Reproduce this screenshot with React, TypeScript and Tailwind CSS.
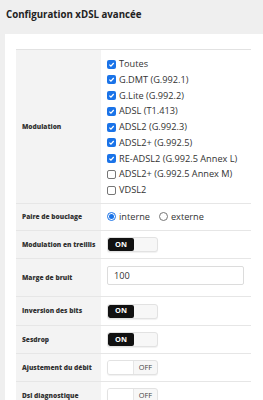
import React from 'react';

const modulations: { label: string; checked: boolean }[] = [
  { label: 'Toutes', checked: true },
  { label: 'G.DMT (G.992.1)', checked: true },
  { label: 'G.Lite (G.992.2)', checked: true },
  { label: 'ADSL (T1.413)', checked: true },
  { label: 'ADSL2 (G.992.3)', checked: true },
  { label: 'ADSL2+ (G.992.5)', checked: true },
  { label: 'RE-ADSL2 (G.992.5 Annex L)', checked: true },
  { label: 'ADSL2+ (G.992.5 Annex M)', checked: false },
  { label: 'VDSL2', checked: false },
];

const Checkbox: React.FC<{ checked: boolean }> = ({ checked }) =>
  checked ? (
    <span className="w-[9px] h-[9px] rounded-[2px] bg-[#1a73e8] flex items-center justify-center flex-shrink-0">
      <svg width="7" height="7" viewBox="0 0 10 10">
        <path d="M2 5.2 L4.2 7.3 L8.2 2.8" stroke="#fff" strokeWidth="1.8" fill="none" />
      </svg>
    </span>
  ) : (
    <span className="w-[9px] h-[9px] rounded-[2px] border border-[#767676] bg-white flex-shrink-0" />
  );

const Radio: React.FC<{ checked: boolean }> = ({ checked }) => (
  <span
    className={`w-[9px] h-[9px] rounded-full border flex items-center justify-center flex-shrink-0 ${
      checked ? 'border-[#1a73e8]' : 'border-[#767676]'
    }`}
  >
    {checked && <span className="w-[5px] h-[5px] rounded-full bg-[#1a73e8]" />}
  </span>
);

const Toggle: React.FC<{ on: boolean }> = ({ on }) => (
  <div className="w-[51px] h-[15px] flex rounded-[3px] border border-[#e2e2e2] bg-[#f7f7f7] shadow-[0_1px_1px_rgba(0,0,0,0.06)] overflow-hidden text-[7.4px]">
    {on ? (
      <>
        <div className="w-[26px] h-full bg-[#111] text-white font-bold flex items-center justify-center rounded-[2px]">ON</div>
        <div className="flex-1" />
      </>
    ) : (
      <>
        <div className="w-[26px] h-full bg-white border-r border-[#e6e6e6]" />
        <div className="flex-1 text-[#444] flex items-center justify-center">OFF</div>
      </>
    )}
  </div>
);

const Row: React.FC<{ label: string; height?: string; children: React.ReactNode }> = ({ label, height, children }) => (
  <div className={`flex border-b border-[#e6e6e6] ${height ?? ''}`}>
    <div className="w-[85px] bg-[#f3f3f3] flex items-center pl-[6px] text-[6.6px] font-extrabold text-[#333] flex-shrink-0">
      {label}
    </div>
    <div className="flex-1 flex items-center pl-[6px]">{children}</div>
  </div>
);

export default function App() {
  return (
    <div className="w-[263px] h-[400px] overflow-hidden bg-[#efefef] pl-[5px]" style={{ fontFamily: '"Open Sans", sans-serif' }}>
      <div className="h-[34px] flex items-center pl-[1px] pb-[3px] text-[9.7px] font-bold text-[#222]">
        Configuration xDSL avancée
      </div>
      <div className="bg-white h-[400px] pt-[15px] pl-[11px] pr-[12px]">
        <div className="border-t border-[#e2e2e2]">
          <Row label="Modulation" height="h-[154px]">
            <div className="flex flex-col pt-[1px] text-[9.2px] text-[#333]">
              {modulations.map(m => (
                <div key={m.label} className="h-[15.75px] flex items-center gap-[3px]">
                  <Checkbox checked={m.checked} />
                  <span>{m.label}</span>
                </div>
              ))}
            </div>
          </Row>
          <Row label="Paire de bouclage" height="h-[27px]">
            <div className="flex items-center text-[9.2px] text-[#333] gap-[3px]">
              <Radio checked />
              <span>interne</span>
              <span className="w-[3px]" />
              <Radio checked={false} />
              <span>externe</span>
            </div>
          </Row>
          <Row label="Modulation en treillis" height="h-[28px]">
            <Toggle on />
          </Row>
          <Row label="Marge de bruit" height="h-[38px]">
            <div className="w-[137px] h-[19px] border border-[#dcdcdc] rounded-[2px] flex items-center pl-[6px] text-[9.2px] text-[#333] -mt-[4px]">
              100
            </div>
          </Row>
          <Row label="Inversion des bits" height="h-[29px]">
            <Toggle on />
          </Row>
          <Row label="Sesdrop" height="h-[28px]">
            <Toggle on />
          </Row>
          <Row label="Ajustement du débit" height="h-[28px]">
            <Toggle on={false} />
          </Row>
          <Row label="Dsl diagnostique" height="h-[28px]">
            <Toggle on={false} />
          </Row>
        </div>
      </div>
    </div>
  );
}
